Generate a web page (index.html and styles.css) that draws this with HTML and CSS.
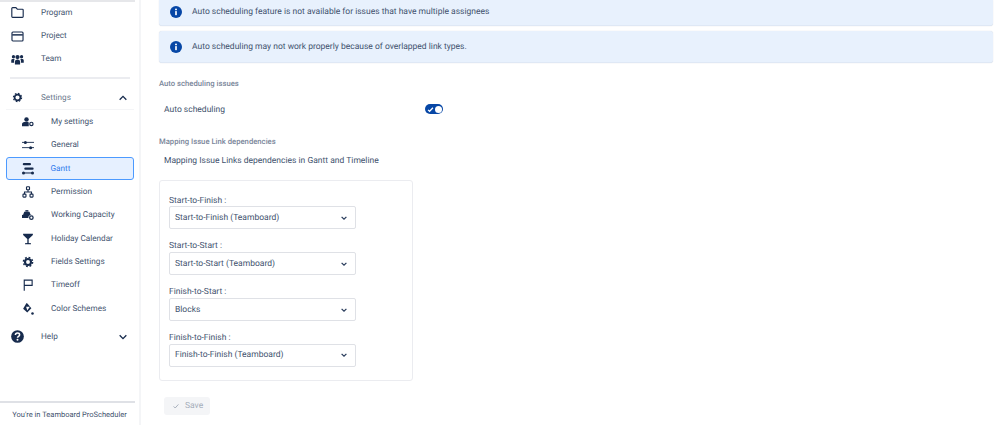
FILE: index.html
```html
<!DOCTYPE html>
<html lang="en">
  <head>
    <meta charset="UTF-8" />
    <title>Gantt settings</title>
    <link rel="stylesheet" href="styles.css">
  </head>
  <body>
    <aside class="sidebar">
      <nav class="nav">
        <a class="item">
          <svg class="icon" viewBox="0 0 16 16"><path d="M1 3a1 1 0 0 1 1-1h4l1.800 2H14a1 1 0 0 1 1 1v8a1 1 0 0 1-1 1H2a1 1 0 0 1-1-1z" fill="none" stroke="#172b4d" stroke-width="1.400"/></svg>
          <span>Program</span>
        </a>
        <a class="item">
          <svg class="icon" viewBox="0 0 16 16"><rect x="1.200" y="2.500" width="13.600" height="11" rx="1.200" fill="none" stroke="#172b4d" stroke-width="1.400"/><path d="M1.500 6h13" stroke="#172b4d" stroke-width="1.800"/></svg>
          <span>Project</span>
        </a>
        <a class="item">
          <svg class="icon" viewBox="0 0 16 16" fill="#172b4d"><circle cx="8" cy="5" r="2.600"/><circle cx="3" cy="4.500" r="2"/><circle cx="13" cy="4.500" r="2"/><path d="M4.800 14v-3c0-1.800 1.200-2.900 3.200-2.900s3.200 1.100 3.200 2.900v3z"/><path d="M3.800 12H.3V9.200C.3 8 1.300 7 3 7c.5 0 1.100.1 1.500.4-.5.7-.7 1.600-.7 2.400zM12.200 12h3.500V9.200C15.700 8 14.700 7 13 7c-.5 0-1.100.1-1.500.4.500.7.7 1.600.7 2.400z"/></svg>
          <span>Team</span>
        </a>
        <div class="divider"></div>
        <a class="item item-head">
          <svg class="icon icon-sm" viewBox="0 0 16 16"><circle cx="8" cy="8" r="4.200" fill="none" stroke="#172b4d" stroke-width="2.400"/><circle cx="8" cy="8" r="6" fill="none" stroke="#172b4d" stroke-width="1.600" stroke-dasharray="2.400 2.300"/></svg>
          <span>Settings</span>
          <svg class="chevron" viewBox="0 0 12 12"><path d="M2 8l4-4 4 4" fill="none" stroke="#172b4d" stroke-width="1.600"/></svg>
        </a>
        <div class="subnav">
          <a class="sub">
            <svg class="icon-sub" viewBox="0 0 16 16" fill="#172b4d"><circle cx="6" cy="4.500" r="3"/><path d="M0 13.500v-2.500c0-1.700 1.500-3 3-3h5c.7 0 1 .4 1 1v4.500z"/><circle cx="12.500" cy="10.500" r="2.200" fill="none" stroke="#172b4d" stroke-width="1.600"/></svg>
            <span>My settings</span>
          </a>
          <a class="sub">
            <svg class="icon-sub" viewBox="0 0 16 16"><path d="M0 4.500h16M0 11.500h16" stroke="#172b4d" stroke-width="1.200"/><circle cx="4.500" cy="4.500" r="2" fill="#172b4d"/><circle cx="11.500" cy="11.500" r="2" fill="#172b4d"/></svg>
            <span>General</span>
          </a>
          <a class="sub sub-active">
            <svg class="icon-sub" viewBox="0 0 16 16" fill="#172b4d"><rect x="1" y="0" width="11" height="3" rx="1.500"/><rect x="3" y="6" width="12.500" height="3" rx="1.500"/><rect x="1" y="12.600" width="14" height="1.400"/><circle cx="2" cy="13.300" r="2"/><circle cx="14" cy="13.300" r="2"/></svg>
            <span>Gantt</span>
          </a>
          <a class="sub">
            <svg class="icon-sub" viewBox="0 0 16 16"><rect x="6" y="1" width="4" height="4" rx=".8" fill="none" stroke="#172b4d" stroke-width="1.500"/><rect x="1.300" y="10.800" width="4" height="4" rx=".8" fill="none" stroke="#172b4d" stroke-width="1.500"/><rect x="10.700" y="10.800" width="4" height="4" rx=".8" fill="none" stroke="#172b4d" stroke-width="1.500"/><path d="M8 5v3M3.300 10.800V8h9.400v2.800" fill="none" stroke="#172b4d" stroke-width="1.400"/></svg>
            <span>Permission</span>
          </a>
          <a class="sub">
            <svg class="icon-sub" viewBox="0 0 16 16" fill="#172b4d"><path d="M0 8l1.500-.5L3 3.500h7L11.500 7.500h1v.5a3.500 3.500 0 0 0-4 4H0z"/><path d="M4.500 3.500V1.500h4v2z"/><circle cx="12.500" cy="11.500" r="2.300" fill="none" stroke="#172b4d" stroke-width="1.700"/></svg>
            <span>Working Capacity</span>
          </a>
          <a class="sub">
            <svg class="icon-sub" viewBox="0 0 16 16" fill="#172b4d"><path d="M1.500 1h13v1.500L8.900 8V13.400l3.100.4V15H4v-1.200l3.100-.4V8L1.500 2.500z"/></svg>
            <span>Holiday Calendar</span>
          </a>
          <a class="sub">
            <svg class="icon-sub" viewBox="0 0 16 16"><circle cx="8" cy="8" r="4" fill="none" stroke="#172b4d" stroke-width="2.800"/><circle cx="8" cy="8" r="6.200" fill="none" stroke="#172b4d" stroke-width="1.800" stroke-dasharray="2.400 2.470"/></svg>
            <span>Fields Settings</span>
          </a>
          <a class="sub">
            <svg class="icon-sub" viewBox="0 0 16 16"><path d="M3 15.500V1.500h10.500v7H3" fill="none" stroke="#172b4d" stroke-width="1.500"/></svg>
            <span>Timeoff</span>
          </a>
          <a class="sub">
            <svg class="icon-sub" viewBox="0 0 16 16" fill="#172b4d"><path d="M6 0l1.500 1L12.500 7 7 12.500 1.500 7.500z"/><path d="M5.500 5h5L7 10z" fill="#fff"/><circle cx="14" cy="14" r="1.700"/></svg>
            <span>Color Schemes</span>
          </a>
        </div>
        <a class="item item-help">
          <svg class="icon" viewBox="0 0 16 16"><circle cx="8" cy="8" r="7.800" fill="#172b4d"/><path d="M5.400 6.200C5.500 4.700 6.500 3.800 8 3.800c1.600 0 2.600.9 2.600 2.100 0 2-2.600 1.800-2.600 3.700" fill="none" stroke="#fff" stroke-width="1.900"/><circle cx="8" cy="12" r="1.200" fill="#fff"/></svg>
          <span>Help</span>
          <svg class="chevron" viewBox="0 0 12 12"><path d="M2 4l4 4 4-4" fill="none" stroke="#172b4d" stroke-width="1.600"/></svg>
        </a>
      </nav>
      <div class="sidebar-foot">You're in Teamboard ProScheduler</div>
    </aside>

    <main class="content">
      <div class="banner banner-cut">
        <svg class="info" viewBox="0 0 16 16"><circle cx="8" cy="8" r="8" fill="#0747a6"/><rect x="6.900" y="6.800" width="2.200" height="5.400" fill="#fff"/><circle cx="8" cy="4.500" r="1.300" fill="#fff"/></svg>
        <span>Auto scheduling feature is not available for issues that have multiple assignees</span>
      </div>
      <div class="banner">
        <svg class="info" viewBox="0 0 16 16"><circle cx="8" cy="8" r="8" fill="#0747a6"/><rect x="6.900" y="6.800" width="2.200" height="5.400" fill="#fff"/><circle cx="8" cy="4.500" r="1.300" fill="#fff"/></svg>
        <span>Auto scheduling may not work properly because of overlapped link types.</span>
      </div>

      <h2 class="section-title title-auto">Auto scheduling issues</h2>
      <div class="toggle-row">
        <span class="toggle-label">Auto scheduling</span>
        <span class="toggle">
          <svg class="toggle-check" viewBox="0 0 10 10"><path d="M1.500 5.500l2.200 2L8.500 2.500" fill="none" stroke="#fff" stroke-width="1.800"/></svg>
          <span class="toggle-knob"></span>
        </span>
      </div>

      <h2 class="section-title title-map">Mapping Issue Link dependencies</h2>
      <p class="map-desc">Mapping Issue Links dependencies in Gantt and Timeline</p>

      <div class="map-card">
        <label class="field">
          <span>Start-to-Finish :</span>
          <div class="select">Start-to-Finish (Teamboard)<svg class="select-arrow" viewBox="0 0 10 10"><path d="M2 3.500l3 3 3-3" fill="none" stroke="#253858" stroke-width="1.500"/></svg></div>
        </label>
        <label class="field">
          <span>Start-to-Start :</span>
          <div class="select">Start-to-Start (Teamboard)<svg class="select-arrow" viewBox="0 0 10 10"><path d="M2 3.500l3 3 3-3" fill="none" stroke="#253858" stroke-width="1.500"/></svg></div>
        </label>
        <label class="field">
          <span>Finish-to-Start :</span>
          <div class="select">Blocks<svg class="select-arrow" viewBox="0 0 10 10"><path d="M2 3.500l3 3 3-3" fill="none" stroke="#253858" stroke-width="1.500"/></svg></div>
        </label>
        <label class="field">
          <span>Finish-to-Finish :</span>
          <div class="select">Finish-to-Finish (Teamboard)<svg class="select-arrow" viewBox="0 0 10 10"><path d="M2 3.500l3 3 3-3" fill="none" stroke="#253858" stroke-width="1.500"/></svg></div>
        </label>
      </div>

      <button class="save">
        <svg class="save-check" viewBox="0 0 10 10"><path d="M2 5.500l2 2 4-4.500" fill="none" stroke="#a5adba" stroke-width="1.200"/></svg>
        Save
      </button>
    </main>
  </body>
</html>
```

FILE: styles.css
```css
* {
  box-sizing: border-box;
}
html,
body {
  height: 100%;
}
body {
  margin: 0;
  display: flex;
  overflow: hidden;
  font-family: Roboto, "Liberation Sans", sans-serif;
  font-size: 8.500px;
  text-rendering: geometricPrecision;
  color: #42526e;
  background: white;
}

/* Sidebar */
.sidebar {
  width: 141px;
  height: 425px;
  flex: none;
  display: flex;
  flex-direction: column;
  border-right: 2px solid #f4f5f7;
  font-size: 8.200px;
}
.nav {
  flex: 1;
  margin-right: -1px;
}
.nav::before {
  content: "";
  display: block;
  height: 2px;
  width: 135px;
  margin-bottom: -1px;
  background: #e6e7ea;
}
.item {
  height: 23.400px;
  display: flex;
  align-items: center;
  padding-left: 11px;
  padding-right: 12px;
  color: #42526e;
}
.icon {
  width: 13px;
  height: 13px;
  margin-right: 17px;
  flex: none;
}
.icon-sm {
  width: 11px;
  height: 11px;
  margin-left: 1px;
  margin-right: 18px;
}
.chevron {
  width: 10px;
  height: 10px;
  margin-left: auto;
}
.divider {
  height: 2px;
  background: #ebecf0;
  margin: 6px 10px 7px 10px;
}
.item-head {
  color: #6b778c;
}
.subnav {
  border-top: 1px solid #f4f5f7;
  margin: -0.500px 6px 0 6px;
}
.sub {
  height: 23.400px;
  display: flex;
  align-items: center;
  padding-left: 16px;
  color: #42526e;
}
.icon-sub {
  width: 12px;
  height: 12px;
  margin-right: 17px;
  flex: none;
}
.sub-active {
  background: #e6f0ff;
  border: 1.500px solid #4c9aff;
  border-radius: 3px;
  color: #2f7bed;
  padding-left: 14.500px;
}
.item-help {
  margin-top: 4.500px;
}
.sidebar-foot {
  height: 24px;
  text-align: center;
  font-size: 7.500px;
  line-height: 28px;
  color: #42526e;
  white-space: nowrap;
  background: linear-gradient(#dfe1e6, #dfe1e6) no-repeat 0 0 / 135px 2px;
}

/* Main */
.content {
  flex: 1;
  padding: 0 6px 0 18px;
}
.banner {
  height: 32px;
  background: #e8f1fd;
  border-radius: 3px;
  border-bottom: 1px solid #dfe8f5;
  box-shadow: 0 0 1px rgba(9, 30, 66, 0.2);
  display: flex;
  align-items: center;
  padding: 1px 0 0 11px;
  margin-bottom: 5px;
}
.banner-cut {
  height: 26px;
  border-top-left-radius: 0;
  border-top-right-radius: 0;
  padding: 0 0 2px 11px;
}
.info {
  width: 12px;
  height: 12px;
  margin-right: 10px;
  flex: none;
}
.section-title {
  margin: 0;
  font-size: 7.700px;
  font-weight: 500;
  color: #7a869a;
}
.title-auto {
  margin-top: 16px;
}
.toggle-row {
  display: flex;
  align-items: center;
  justify-content: space-between;
  width: 284px;
  height: 16px;
  margin-top: 13px;
  padding-left: 5px;
}
.toggle-label {
  padding-top: 1px;
}
.toggle {
  width: 18.500px;
  height: 10px;
  background: #0747a6;
  border-radius: 5px;
  position: relative;
  display: block;
}
.toggle-check {
  position: absolute;
  left: 2.500px;
  top: 1.500px;
  width: 7px;
  height: 7px;
}
.toggle-knob {
  position: absolute;
  right: 1.500px;
  top: 1.500px;
  width: 7px;
  height: 7px;
  background: white;
  border-radius: 50%;
}
.title-map {
  margin-top: 20px;
}
.map-desc {
  margin: 9px 0 0 5px;
  line-height: 12px;
}
.map-card {
  width: 254px;
  height: 201.500px;
  margin-top: 12.600px;
  border: 1px solid #ebecf0;
  border-radius: 3px;
  padding: 14px 9px 0 9px;
}
.field {
  display: block;
  margin-bottom: 11px;
}
.field span {
  display: block;
  line-height: 12px;
  margin-bottom: -0.500px;
}
.select {
  width: 187px;
  height: 23.400px;
  border: 1px solid #dfe1e6;
  border-radius: 2px;
  display: flex;
  align-items: center;
  justify-content: space-between;
  padding: 0 7px 0 5px;
}
.select-arrow {
  width: 8px;
  height: 8px;
}
.save {
  display: flex;
  align-items: center;
  margin: 15.500px 0 0 5px;
  width: 46px;
  height: 18.500px;
  padding: 0 0 0 8px;
  border: none;
  border-radius: 3px;
  background: #f4f5f7;
  color: #a5adba;
  font-family: inherit;
  font-size: 8.500px;
  text-rendering: inherit;
}
.save-check {
  width: 8px;
  height: 8px;
  margin-right: 5px;
}
```
